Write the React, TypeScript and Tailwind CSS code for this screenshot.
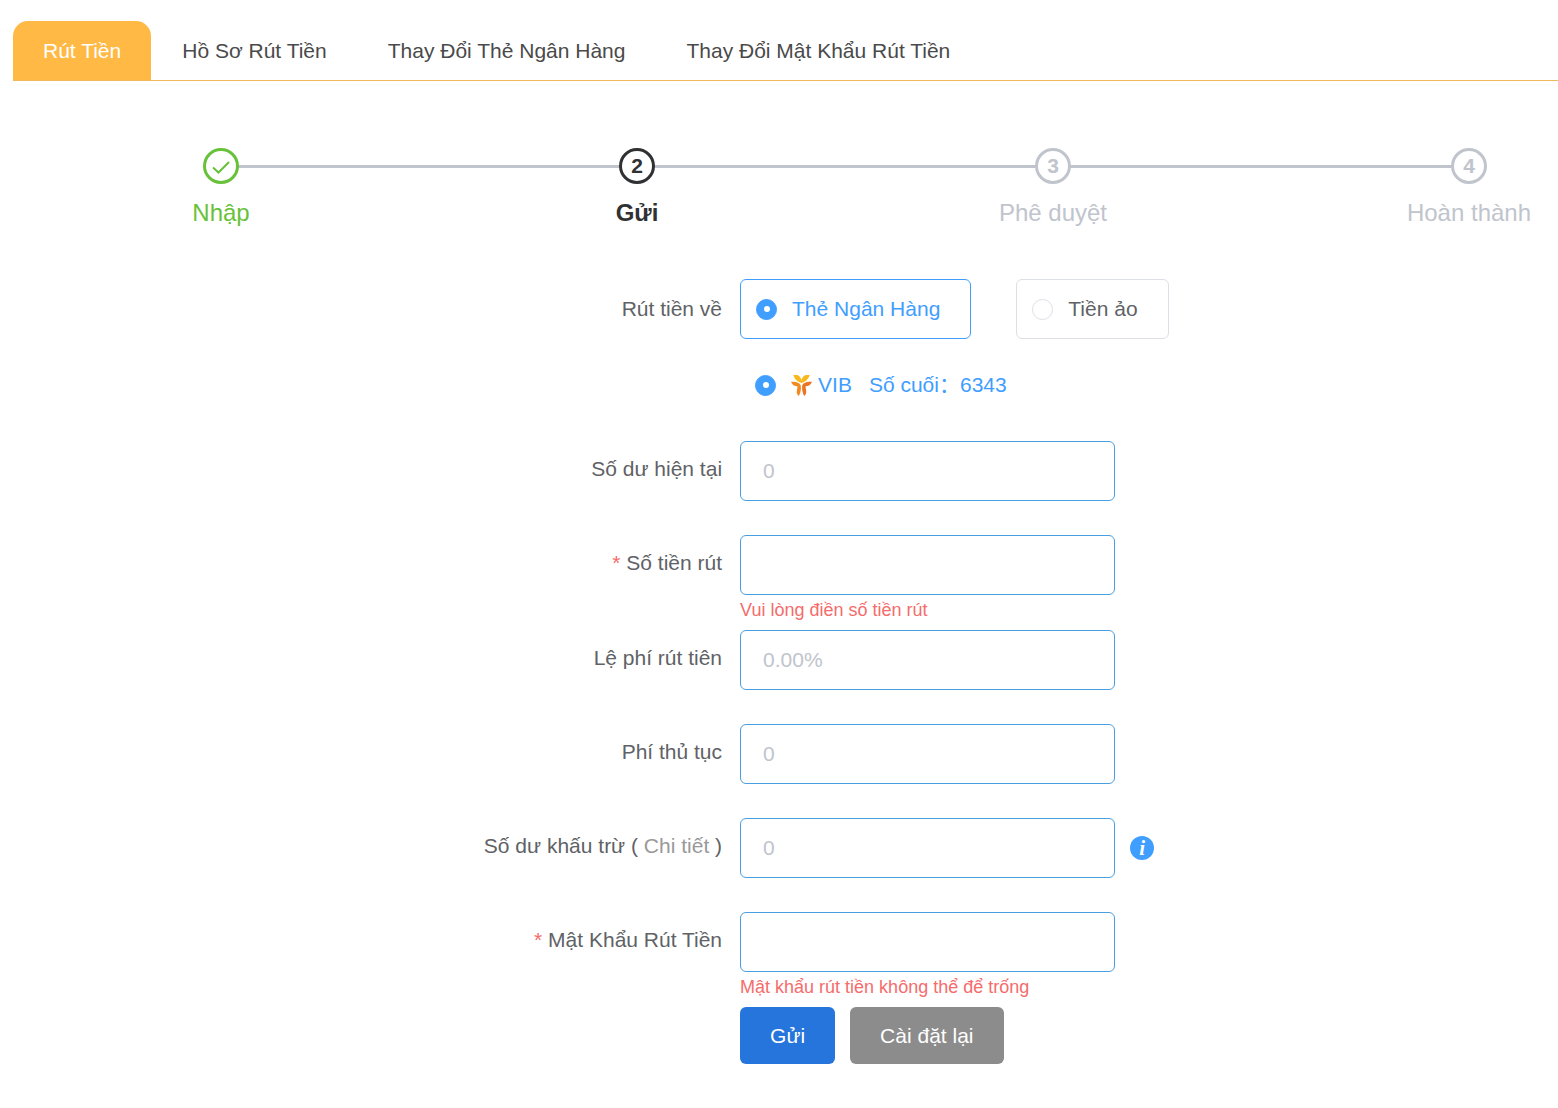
import { useState } from 'react';
import type { ReactNode } from 'react';

const tabs = ['Rút Tiền', 'Hồ Sơ Rút Tiền', 'Thay Đổi Thẻ Ngân Hàng', 'Thay Đổi Mật Khẩu Rút Tiền'];

const steps = [
  { n: 1, title: 'Nhập', color: 'text-[#67c23a]', weight: 'font-normal' },
  { n: 2, title: 'Gửi', color: 'text-[#303133]', weight: 'font-bold' },
  { n: 3, title: 'Phê duyệt', color: 'text-[#c0c4cc]', weight: 'font-normal' },
  { n: 4, title: 'Hoàn thành', color: 'text-[#c0c4cc]', weight: 'font-normal' },
];

const radioClass =
  'grid size-[21px] shrink-0 appearance-none place-items-center rounded-full border border-[#dcdfe6] bg-white checked:border-[#409eff] checked:bg-[#409eff] before:size-[6px] before:rounded-full before:bg-white';

function VibLogo() {
  return (
    <svg viewBox="0 0 20 20" className="size-[21px] shrink-0" aria-hidden="true">
      <path d="M2.200 0H6c2 .8 3.500 2.600 4 5 .5-2.400 2-4.200 4-5h3.800c-1 3.800-3.600 6.400-7.800 7.600C5.800 6.400 3.200 3.800 2.200 0z" fill="#fbb81c" />
      <path d="M0 6.400c4.500-.3 8.400.6 9.300 3.600.5 3.500-.2 7-1.800 10-2-1.400-2.400-3.400-1.800-6 .3-1.400.5-2.400.3-3.200C3.400 10.800 1 9.400 0 6.400z" fill="#f28a22" />
      <path d="M20 6.400c-4.500-.3-8.400.6-9.300 3.600-.5 3.500.2 7 1.800 10 2-1.400 2.400-3.400 1.800-6-.3-1.400-.5-2.400-.3-3.200 2.600 0 5-1.400 6-4.400z" fill="#ec7424" />
    </svg>
  );
}

type FieldProps = {
  id: string;
  label: string;
  type?: string;
  value?: string;
  required?: boolean;
  error?: string;
  detail?: boolean;
  children?: ReactNode;
};

function Field({ id, label, type = 'text', value, required, error, detail, children }: FieldProps) {
  return (
    <div className="grid grid-cols-[47.5%_1fr]">
      <div className="pr-[18px] text-right leading-[56px]">
        <label htmlFor={id}>
          {required && <span className="mr-[6px] text-[#f56c6c]">*</span>}
          {label}
        </label>
        {detail && (
          <>
            {' ( '}
            <a href="#detail" className="text-[#999999]">Chi tiết</a>
            {' )'}
          </>
        )}
      </div>
      <div>
        <div className="flex items-center gap-[15px]">
          <input
            id={id}
            type={type}
            defaultValue={value}
            readOnly={value !== undefined}
            className="h-[60px] w-[375px] rounded-[6px] border border-[#4a9fe0] bg-white px-[22px] text-[#606266] outline-none read-only:text-[#c0c4cc]"
          />
          {children}
        </div>
        {error ? (
          <p className="pt-[6px] pb-[11px] text-[18px] leading-[18px] text-[#f56c6c]">{error}</p>
        ) : (
          <div className="h-[34px]" />
        )}
      </div>
    </div>
  );
}

export default function App() {
  const [tab, setTab] = useState(0);
  const [method, setMethod] = useState('bank');

  return (
    <div className="min-h-screen overflow-hidden bg-white font-['Liberation_Sans','Noto_Sans_CJK_SC',sans-serif] text-[21px] text-[#606266]">
      {/* Tabs */}
      <nav className="ml-[13px] flex gap-px border-b border-[#f0b95c] pt-[21px]">
        {tabs.map((t, i) => (
          <button
            key={t}
            type="button"
            onClick={() => setTab(i)}
            className={`h-[59px] rounded-t-[15px] px-[30px] whitespace-nowrap ${i === tab ? 'bg-[#ffb944] text-white' : 'text-[#4a4a4a]'}`}
          >
            {t}
          </button>
        ))}
      </nav>

      {/* Steps */}
      <div className="ml-[13px] overflow-hidden pt-[67px]">
        <ol className="-mr-[119px] flex">
          {steps.map((s, i) => (
            <li key={s.n} className={`relative flex-1 text-center ${s.color}`}>
              {i < steps.length - 1 && <div className="absolute top-[17px] left-1/2 h-[3px] w-full bg-[#c0c4cc]" />}
              <div className="relative mx-auto flex size-[36px] items-center justify-center rounded-full border-[3px] border-current bg-white font-bold">
                {i === 0 ? (
                  <svg viewBox="0 0 20 20" className="size-[20px]" fill="none" stroke="currentColor" strokeWidth="2" aria-hidden="true">
                    <path d="M2 11.500l5.500 5L18 6" />
                  </svg>
                ) : (
                  s.n
                )}
              </div>
              <div className={`text-[24px] leading-[57px] ${s.weight}`}>{s.title}</div>
            </li>
          ))}
        </ol>
      </div>

      {/* Withdraw form */}
      <form className="pt-[38px]" onSubmit={e => e.preventDefault()}>
        <div className="grid grid-cols-[47.5%_1fr]">
          <div className="pr-[18px] text-right leading-[60px]">Rút tiền về</div>
          <div>
            <div className="flex gap-[45px]">
              {[
                { id: 'bank', label: 'Thẻ Ngân Hàng' },
                { id: 'crypto', label: 'Tiền ảo' },
              ].map(m => (
                <label
                  key={m.id}
                  className={`flex h-[60px] items-center gap-[15px] rounded-[6px] border pr-[30px] pl-[15px] whitespace-nowrap ${method === m.id ? 'border-[#409eff] text-[#409eff]' : 'border-[#dcdfe6]'}`}
                >
                  <input type="radio" name="method" checked={method === m.id} onChange={() => setMethod(m.id)} className={radioClass} />
                  {m.label}
                </label>
              ))}
            </div>
            <label className="flex h-[92px] items-center gap-[15px] pl-[15px] whitespace-nowrap text-[#409eff]">
              <input type="radio" name="card" defaultChecked className={radioClass} />
              <span className="flex items-center gap-[6px]">
                <VibLogo />
                <span>VIB</span>
                <span className="ml-[11px]">Số cuối：6343</span>
              </span>
            </label>
            <div className="h-[10px]" />
          </div>
        </div>

        <Field id="balance" label="Số dư hiện tại" value="0" />
        <Field id="amount" label="Số tiền rút" required error="Vui lòng điền số tiền rút" />
        <Field id="rate" label="Lệ phí rút tiên" value="0.00%" />
        <Field id="fee" label="Phí thủ tục" value="0" />
        <Field id="deduct" label="Số dư khấu trừ" value="0" detail>
          <button
            type="button"
            aria-label="Chi tiết"
            className="flex size-[24px] items-center justify-center rounded-full bg-[#409eff] font-['Liberation_Serif',serif] leading-[24px] font-bold text-white italic"
          >
            i
          </button>
        </Field>
        <Field id="password" label="Mật Khẩu Rút Tiền" type="password" required error="Mật khẩu rút tiền không thể để trống" />

        <div className="flex gap-[15px] pb-[44px] pl-[47.5%] text-white">
          <button type="submit" className="h-[57px] rounded-[6px] bg-[#2575dc] px-[30px]">Gửi</button>
          <button type="reset" className="h-[57px] rounded-[6px] bg-[#8c8c8c] px-[30px]">Cài đặt lại</button>
        </div>
      </form>
    </div>
  );
}
